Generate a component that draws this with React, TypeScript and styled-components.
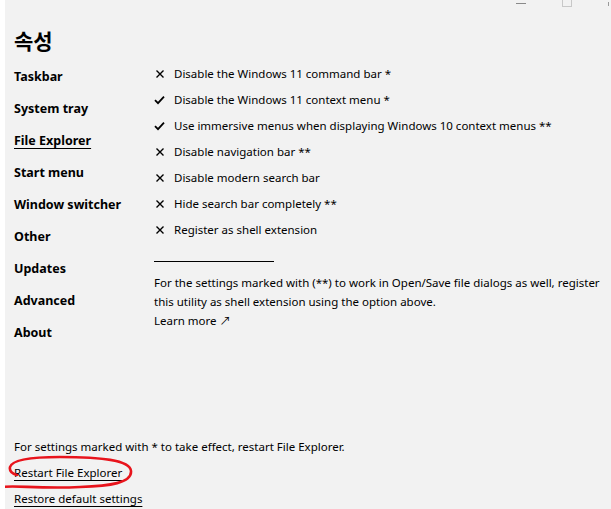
import React from 'react'
import styled, { createGlobalStyle } from 'styled-components'

const GlobalStyle = createGlobalStyle`
  html, body {
    margin: 0;
    padding: 0;
    background: #ffffff;
  }
  body {
    font-family: 'Noto Sans', 'Noto Sans CJK KR', sans-serif;
    color: #000;
  }
`

const Window = styled.div`
  margin-left: 5px;
  height: 509px;
  background: #f2f2f2;
  display: flex;
  flex-direction: column;
  position: relative;
  overflow: hidden;
`

const TitleBar = styled.div`
  height: 8px;
  display: flex;
  justify-content: flex-end;
  align-items: flex-start;
  gap: 36px;
`

const MinBtn = styled.div`
  width: 10px;
  height: 1px;
  margin-top: 3px;
  background: #8a8a8a;
`

const MaxBtn = styled.div`
  width: 8px;
  height: 6px;
  margin-top: -1px;
  border: 1px solid #c8c8c8;
`

const CloseBtn = styled.div`
  width: 2px;
  height: 4px;
  margin-top: 2px;
  border-left: 1px solid #9a9a9a;
`

const Heading = styled.h1`
  margin: 19px 0 0 9px;
  font-family: 'Noto Sans CJK KR', sans-serif;
  font-size: 21px;
  font-weight: 700;
  line-height: 26px;
`

const Body = styled.div`
  display: flex;
  margin-top: 12px;
  padding-left: 9px;
`

const Nav = styled.nav`
  width: 140px;
  padding-top: 3px;
  display: flex;
  flex-direction: column;
`

const NavItem = styled.a<{ $active?: boolean }>`
  height: 32px;
  font-size: 12.5px;
  font-weight: 700;
  line-height: 18px;
  color: #000;
  text-decoration: ${({ $active }) => ($active ? 'underline' : 'none')};
  text-underline-offset: 3px;
  text-decoration-thickness: 1px;
`

const Content = styled.div`
  display: flex;
  flex-direction: column;
`

const Option = styled.div`
  height: 26px;
  display: flex;
  align-items: flex-start;
  gap: 9px;
  font-size: 11.5px;
  line-height: 17px;
`

const Mark = styled.span`
  width: 11px;
  height: 17px;
  display: flex;
  align-items: center;
  justify-content: center;
`

const Rule = styled.div`
  width: 120px;
  height: 1px;
  background: #000;
  margin-top: 14px;
`

const Note = styled.p`
  margin: 11px 0 0;
  width: 450px;
  font-size: 11.5px;
  line-height: 19px;
`

const LearnMore = styled.a`
  display: block;
  font-size: 11.5px;
  line-height: 20px;
  color: #000;
  text-decoration: none;
`

const Footer = styled.div`
  margin-top: auto;
  margin-bottom: -3px;
  padding-left: 9px;
  display: flex;
  flex-direction: column;
  font-size: 11.5px;
`

const FooterText = styled.div`
  line-height: 26px;
`

const FooterLink = styled.a`
  line-height: 26px;
  color: #000;
  text-decoration: underline;
  text-underline-offset: 3px;
  text-decoration-thickness: 1px;
`

const Annotation = styled.svg`
  position: absolute;
  left: -5px;
  top: 455px;
  pointer-events: none;
`

const Cross = () => (
  <svg width="10" height="10" viewBox="0 0 10 10">
    <path d="M1.5 1.5 L8.5 8.5 M8.5 1.5 L1.5 8.5" stroke="#000" strokeWidth="1.4" />
  </svg>
)

const Check = () => (
  <svg width="11" height="10" viewBox="0 0 11 10">
    <path d="M1 5.2 L4 8.2 L10 1.6" stroke="#000" strokeWidth="1.8" fill="none" />
  </svg>
)

const navItems = [
  'Taskbar',
  'System tray',
  'File Explorer',
  'Start menu',
  'Window switcher',
  'Other',
  'Updates',
  'Advanced',
  'About',
]

const options = [
  { on: false, text: 'Disable the Windows 11 command bar *' },
  { on: true, text: 'Disable the Windows 11 context menu *' },
  { on: true, text: 'Use immersive menus when displaying Windows 10 context menus **' },
  { on: false, text: 'Disable navigation bar **' },
  { on: false, text: 'Disable modern search bar' },
  { on: false, text: 'Hide search bar completely **' },
  { on: false, text: 'Register as shell extension' },
]

const App = () => {
  return (
    <>
      <GlobalStyle />
      <Window>
        <TitleBar>
          <MinBtn />
          <MaxBtn />
          <CloseBtn />
        </TitleBar>
        <Heading>속성</Heading>
        <Body>
          <Nav>
            {navItems.map((item) => (
              <NavItem key={item} $active={item === 'File Explorer'}>
                {item}
              </NavItem>
            ))}
          </Nav>
          <Content>
            {options.map((o) => (
              <Option key={o.text}>
                <Mark>{o.on ? <Check /> : <Cross />}</Mark>
                {o.text}
              </Option>
            ))}
            <Rule />
            <Note>
              For the settings marked with (**) to work in Open/Save file dialogs as well, register
              this utility as shell extension using the option above.
            </Note>
            <LearnMore>Learn more ↗</LearnMore>
          </Content>
        </Body>
        <Footer>
          <FooterText>For settings marked with * to take effect, restart File Explorer.</FooterText>
          <FooterLink>Restart File Explorer</FooterLink>
          <FooterLink>Restore default settings</FooterLink>
        </Footer>
        <Annotation width="140" height="36" viewBox="0 0 140 36">
          <path
            d="M3 32 C 14 30, 40 34, 80 32 C 110 31, 132 28, 131 16 C 130 5, 100 2, 60 2 C 30 2, 12 5, 10 12 C 9 17, 13 19, 17 20"
            stroke="#e8141c"
            strokeWidth="2.6"
            fill="none"
            strokeLinecap="round"
          />
        </Annotation>
      </Window>
    </>
  )
}

export default App
